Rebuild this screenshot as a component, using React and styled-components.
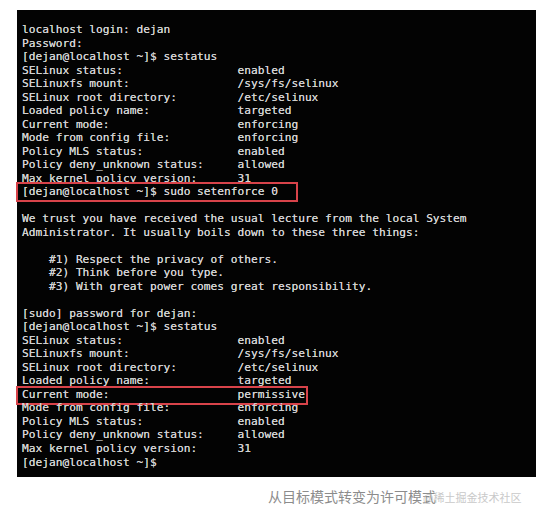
import React from "react";
import styled, { createGlobalStyle } from "styled-components";

const Global = createGlobalStyle`
  html, body { margin: 0; padding: 0; background: #ffffff; }
  body { width: 536px; height: 515px; overflow: hidden; }
`;

const Page = styled.div`
  display: flex;
  flex-direction: column;
  width: 536px;
  padding-top: 10px;
`;

const Terminal = styled.div`
  margin-left: 17px;
  width: 519px;
  height: 467px;
  box-sizing: border-box;
  background: #030303;
  padding: 13px 0 0 5px;
  font-family: "DejaVu Sans Mono", "Liberation Mono", monospace;
  font-size: 11.2px;
  line-height: 13.53px;
  color: #d2d2d2;
  text-shadow: 0 0 0.4px #d2d2d2;
`;

const Line = styled.div`
  position: relative;
  white-space: pre;
  height: 13.53px;
`;

const Mark = styled.span`
  position: absolute;
  left: -6px;
  top: ${(p) => p.$top}px;
  width: ${(p) => p.$w}px;
  height: ${(p) => p.$h}px;
  border: 2px solid #d8434a;
  box-sizing: border-box;
  pointer-events: none;
`;

const Caption = styled.div`
  position: relative;
  height: 38px;
  padding-left: 268px;
  display: flex;
  align-items: center;
  font-family: "Noto Sans CJK SC", "Noto Sans", sans-serif;
  font-size: 14px;
  color: #8c8c8c;
`;

const Watermark = styled.span`
  position: absolute;
  left: 423px;
  top: 12px;
  font-family: "Noto Sans CJK SC", "Noto Sans", sans-serif;
  font-size: 11px;
  color: #c4c4c4;
  opacity: 0.9;
`;

const pad = (k, v) => k.padEnd(32, " ") + v;

const status1 = [
  ["SELinux status:", "enabled"],
  ["SELinuxfs mount:", "/sys/fs/selinux"],
  ["SELinux root directory:", "/etc/selinux"],
  ["Loaded policy name:", "targeted"],
  ["Current mode:", "enforcing"],
  ["Mode from config file:", "enforcing"],
  ["Policy MLS status:", "enabled"],
  ["Policy deny_unknown status:", "allowed"],
  ["Max kernel policy version:", "31"],
];

const status2 = status1.map(([k, v]) =>
  k === "Current mode:" ? [k, "permissive"] : [k, v]
);

const lines = [
  { t: "localhost login: dejan" },
  { t: "Password:" },
  { t: "[dejan@localhost ~]$ sestatus" },
  ...status1.map(([k, v]) => ({ t: pad(k, v) })),
  { t: "[dejan@localhost ~]$ sudo setenforce 0", mark: { top: -3, w: 282, h: 20 } },
  { t: "" },
  { t: "We trust you have received the usual lecture from the local System" },
  { t: "Administrator. It usually boils down to these three things:" },
  { t: "" },
  { t: "    #1) Respect the privacy of others." },
  { t: "    #2) Think before you type." },
  { t: "    #3) With great power comes great responsibility." },
  { t: "" },
  { t: "[sudo] password for dejan:" },
  { t: "[dejan@localhost ~]$ sestatus" },
  ...status2.map(([k, v]) => ({
    t: pad(k, v),
    mark: k === "Current mode:" ? { top: -2, w: 292, h: 19 } : null,
  })),
  { t: "[dejan@localhost ~]$" },
];

export default function App() {
  return (
    <>
      <Global />
      <Page>
        <Terminal>
          {lines.map((l, i) => (
            <Line key={i}>
              {l.t}
              {l.mark && <Mark $top={l.mark.top} $w={l.mark.w} $h={l.mark.h} />}
            </Line>
          ))}
        </Terminal>
        <Caption>
          从目标模式转变为许可模式
          <Watermark>@稀土掘金技术社区</Watermark>
        </Caption>
      </Page>
    </>
  );
}
